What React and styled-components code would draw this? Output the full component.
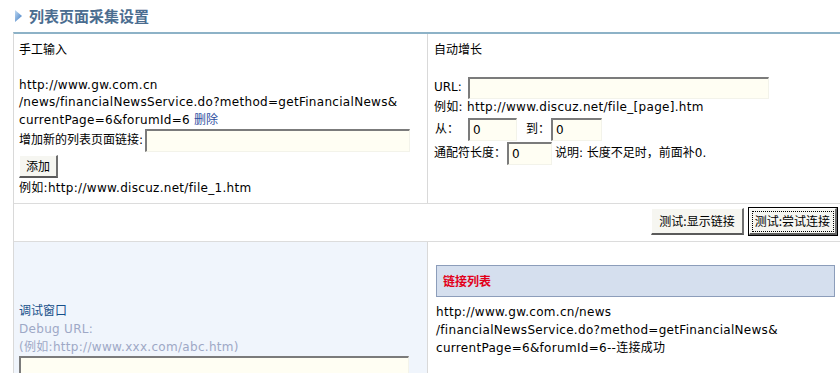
import React from 'react';
import styled, { createGlobalStyle } from 'styled-components';

const GlobalStyle = createGlobalStyle`
  html, body { margin: 0; padding: 0; background: #fff; }
  body {
    font-family: "DejaVu Sans", "Noto Sans CJK SC", sans-serif;
    font-size: 12px;
    letter-spacing: 0.3px;
    color: #000;
    overflow: hidden;
  }
  * { box-sizing: border-box; }
`;

const Page = styled.div`
  padding-left: 13px;
  width: 842px;
`;

const Header = styled.div`
  height: 32px;
  display: flex;
  align-items: center;
  gap: 7px;
  padding-left: 2px;
`;

const Title = styled.h3`
  margin: 0;
  font-family: "Noto Sans CJK SC", sans-serif;
  font-size: 15px;
  font-weight: bold;
  line-height: 20px;
  letter-spacing: 0;
  color: #4b6d90;
`;

const Table = styled.div`
  display: grid;
  grid-template-columns: 413px 1fr;
  border-top: 2px solid #8db2c7;
  border-left: 1px solid #d9d9d9;
`;

const Cell = styled.div`
  line-height: 17.5px;
  border-bottom: 1px solid #dcdcdc;
  border-left: ${p => (p.$divider ? '1px solid #d9d9d9' : 'none')};
  background: ${p => p.$bg || '#fff'};
`;

const ManualCell = styled(Cell)`
  padding: 7.5px 5px 5px 5px;
`;

const AutoCell = styled(Cell)`
  padding: 7.5px 5px 5px 6px;
`;

const ActionBar = styled(Cell)`
  grid-column: 1 / -1;
  display: flex;
  justify-content: flex-end;
  gap: 5px;
  padding: 4px 5px 6px;
`;

const DebugCell = styled(Cell)`
  padding: 60.7px 5px 0 5px;
  line-height: 18px;
  height: 140px;
`;

const ResultCell = styled(Cell)`
  padding: 23px 7px 0 8px;
  line-height: 18px;
`;

const CellTitle = styled.div`
  margin-bottom: 17.5px;
  letter-spacing: 0;
`;

const UrlEntry = styled.div``;

const DeleteLink = styled.a`
  color: #2f4f9f;
  text-decoration: none;
  letter-spacing: 0;
`;

const FieldRow = styled.div`
  display: flex;
  align-items: center;
  height: ${p => p.$h || 23}px;
  margin-top: ${p => p.$mt || 0}px;
  white-space: nowrap;
`;

const Label = styled.span`
  display: inline-block;
  width: ${p => (p.$w ? `${p.$w}px` : 'auto')};
  padding-left: ${p => p.$pl || 0}px;
  letter-spacing: 0;
`;

const TextInput = styled.input`
  width: ${p => p.$w}px;
  height: ${p => p.$h || 23}px;
  margin: 0;
  padding: 0 3px;
  border-style: solid;
  border-width: 2px 1px 1px 2px;
  border-color: #7b7b7b #f3f3ea #f3f3ea #7b7b7b;
  background: #fffef3;
  font-family: "DejaVu Sans", sans-serif;
  font-size: 12px;
  color: #000;
  outline: none;
`;

const Button = styled.button`
  position: relative;
  height: ${p => p.$h || 27}px;
  padding: 0 ${p => p.$px || 6}px;
  margin: 0;
  white-space: nowrap;
  font-family: "Noto Sans CJK SC", sans-serif;
  font-size: 12px;
  letter-spacing: 0;
  line-height: 1;
  color: #000;
  background: #f6f6f1;
  border-style: solid;
  border-width: 1px 2px 2px 1px;
  border-color: #ffffff #6f6f6f #5a5a5a #ffffff;
  box-shadow: ${p => (p.$focused ? '0 0 0 1px #000' : 'none')};
  &::after {
    content: '';
    display: ${p => (p.$focused ? 'block' : 'none')};
    position: absolute;
    inset: 2px 1px 1px 2px;
    border: 1px dotted #000;
  }
`;

const AddButton = styled(Button)`
  display: block;
  margin-top: 3px;
`;

const Hint = styled.div`
  margin-top: ${p => p.$mt || 0}px;
`;

const DebugTitle = styled.div`
  color: #17508a;
  letter-spacing: 0;
`;

const DebugNote = styled.div`
  color: #9ea8c6;
`;

const DebugArea = styled.textarea`
  display: block;
  width: 390px;
  height: 60px;
  margin: 0;
  resize: none;
  border-style: solid;
  border-width: 2px 1px 1px 2px;
  border-color: #7b7b7b #f3f3ea #f3f3ea #7b7b7b;
  background: #fffef3;
  outline: none;
`;

const ListHeader = styled.div`
  height: 32px;
  line-height: 30px;
  padding-left: 6px;
  background: #d5dfee;
  border: 1px solid #8c9dba;
  color: #e2001a;
  font-family: "Noto Sans CJK SC", sans-serif;
  font-weight: bold;
  letter-spacing: 0;
`;

const LinkList = styled.div`
  margin-top: 6.7px;
`;

const Arrow = () => (
  <svg width="7" height="12" viewBox="0 0 7 12">
    <defs>
      <linearGradient id="arrowGrad" x1="0" y1="0" x2="1" y2="1">
        <stop offset="0" stopColor="#c2dbf2" />
        <stop offset="1" stopColor="#3b78c2" />
      </linearGradient>
    </defs>
    <polygon points="0,0 7,6 0,12" fill="url(#arrowGrad)" />
  </svg>
);

export default function App() {
  return (
    <>
      <GlobalStyle />
      <Page>
        <Header>
          <Arrow />
          <Title>列表页面采集设置</Title>
        </Header>
        <Table>
          <ManualCell>
            <CellTitle>手工输入</CellTitle>
            <UrlEntry>
              http://www.gw.com.cn
              <br />
              /news/financialNewsService.do?method=getFinancialNews&amp;
              <br />
              currentPage=6&amp;forumId=6 <DeleteLink href="#">删除</DeleteLink>
            </UrlEntry>
            <FieldRow>
              <Label $w={126}>增加新的列表页面链接:</Label>
              <TextInput $w={265} $h={23} />
            </FieldRow>
            <AddButton $h={23} $px={6}>添加</AddButton>
            <Hint $mt={2}>例如:http://www.discuz.net/file_1.htm</Hint>
          </ManualCell>
          <AutoCell $divider>
            <CellTitle>自动增长</CellTitle>
            <FieldRow $h={22}>
              <Label $w={34}>URL:</Label>
              <TextInput $w={301} $h={22} />
            </FieldRow>
            <Hint>例如: http://www.discuz.net/file_[page].htm</Hint>
            <FieldRow $mt={2}>
              <Label $w={34} $pl={1}>从：</Label>
              <TextInput $w={49} defaultValue="0" />
              <Label $w={34} $pl={9}>到：</Label>
              <TextInput $w={51} defaultValue="0" />
            </FieldRow>
            <FieldRow $mt={1}>
              <Label $w={73}>通配符长度：</Label>
              <TextInput $w={45} defaultValue="0" />
              <Label $pl={3}>说明: 长度不足时，前面补0.</Label>
            </FieldRow>
          </AutoCell>
          <ActionBar>
            <Button $px={7}>测试:显示链接</Button>
            <Button $px={5} $focused>测试:尝试连接</Button>
          </ActionBar>
          <DebugCell $bg="#f0f5fc">
            <DebugTitle>调试窗口</DebugTitle>
            <DebugNote>Debug URL:</DebugNote>
            <DebugNote>(例如:http://www.xxx.com/abc.htm)</DebugNote>
            <DebugArea />
          </DebugCell>
          <ResultCell $divider>
            <ListHeader>链接列表</ListHeader>
            <LinkList>
              http://www.gw.com.cn/news
              <br />
              /financialNewsService.do?method=getFinancialNews&amp;
              <br />
              currentPage=6&amp;forumId=6--连接成功
            </LinkList>
          </ResultCell>
        </Table>
      </Page>
    </>
  );
}
